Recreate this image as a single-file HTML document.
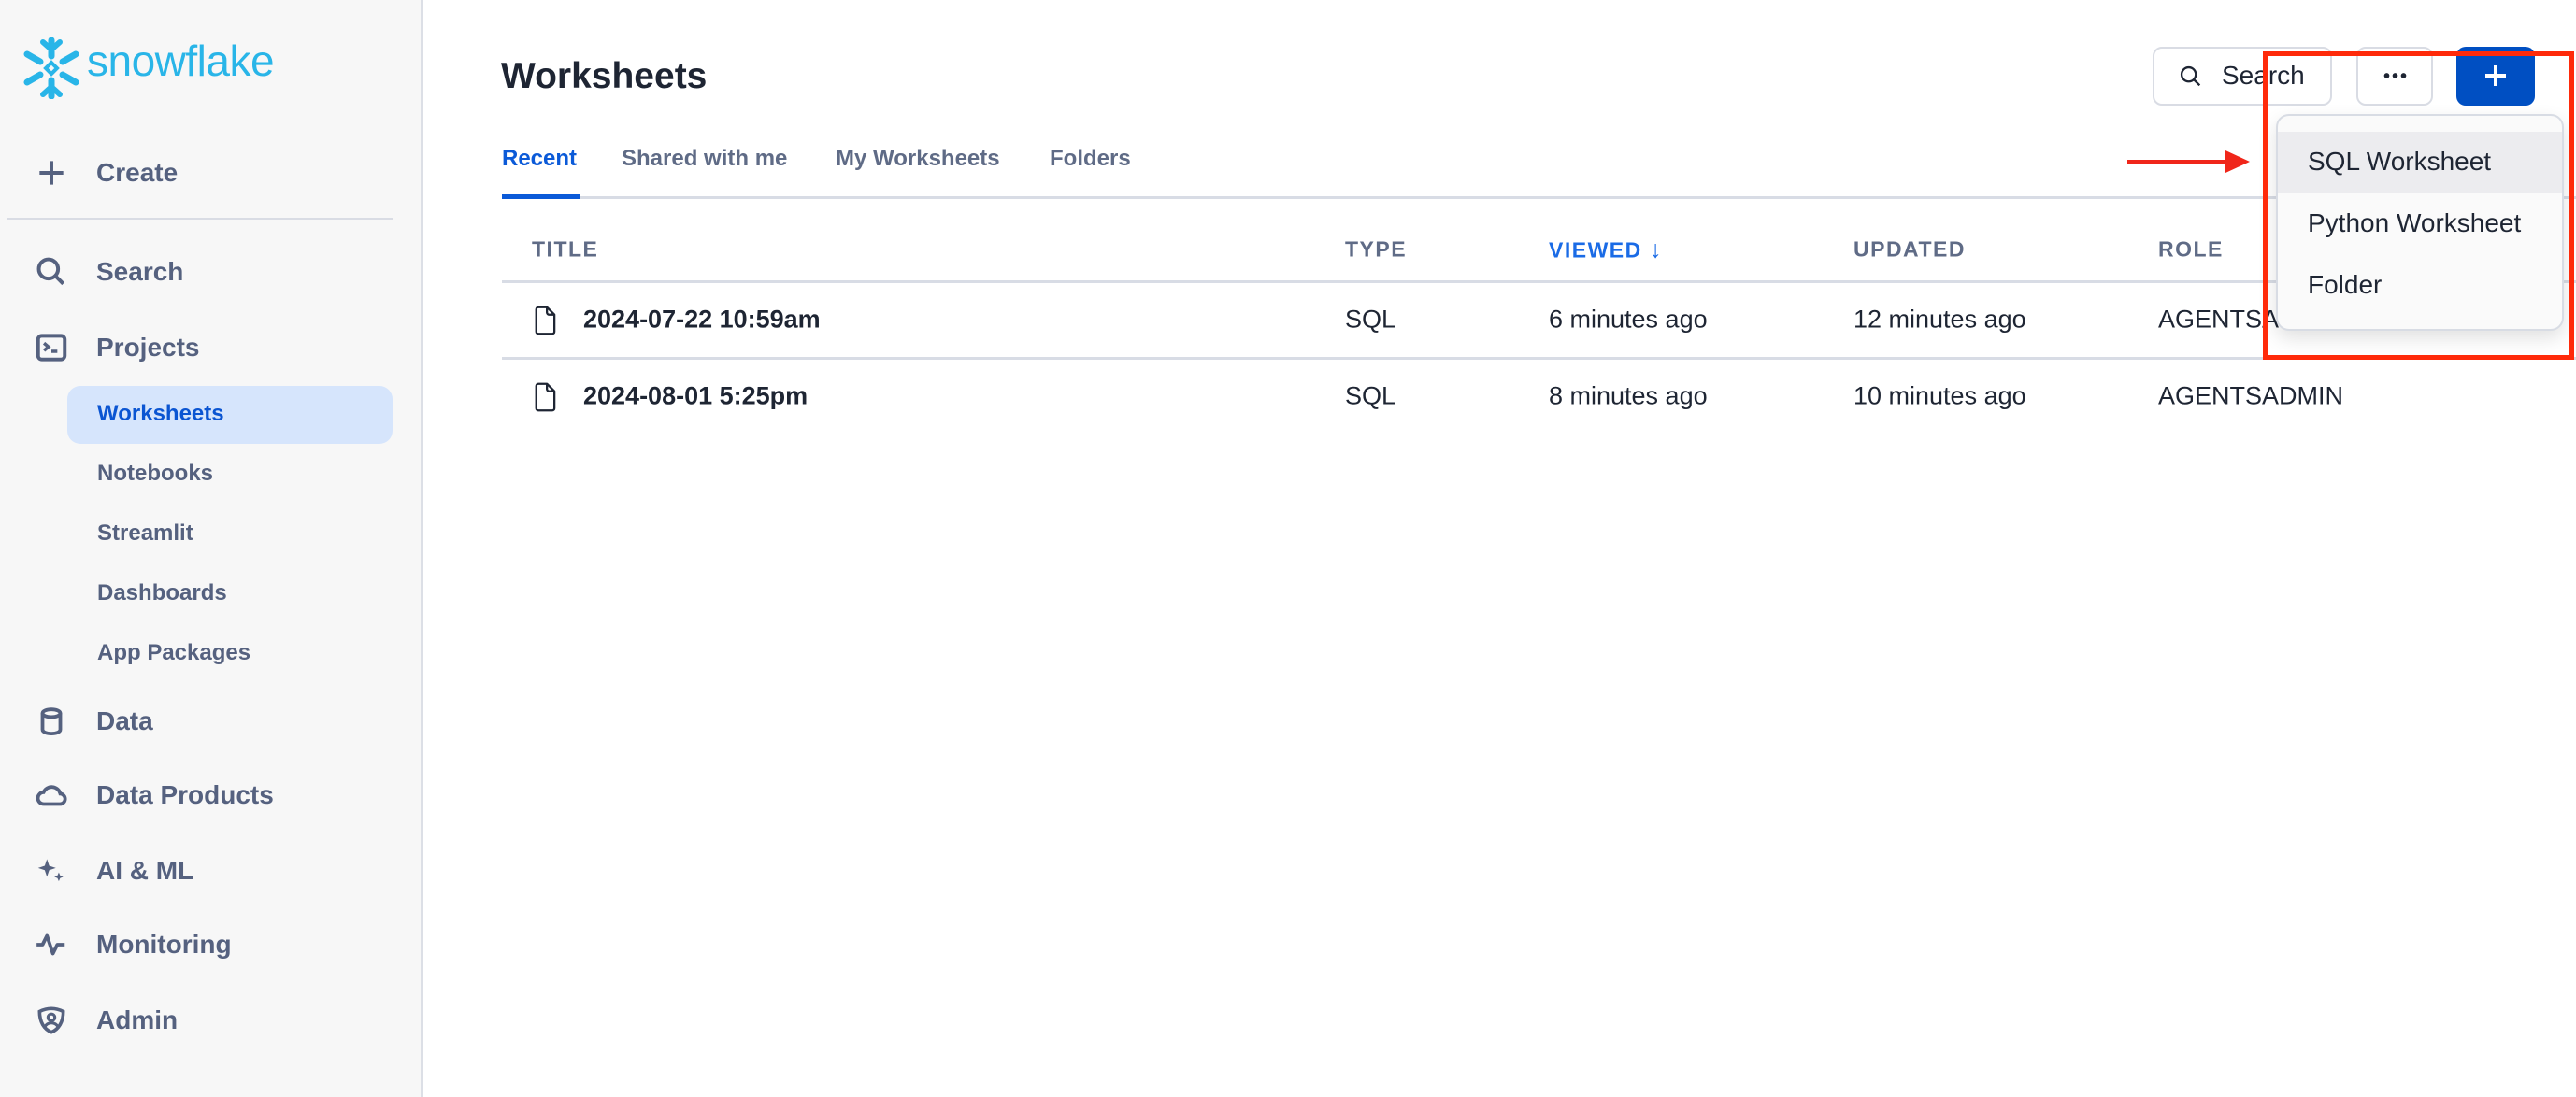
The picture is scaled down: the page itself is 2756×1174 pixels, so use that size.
<!DOCTYPE html>
<html><head><meta charset="utf-8"><style>
*{margin:0;padding:0;box-sizing:border-box}
body{width:2756px;height:1174px;background:#fff;font-family:"Liberation Sans",sans-serif;position:relative;overflow:hidden}
.abs{position:absolute;white-space:nowrap}
#side{position:absolute;left:0;top:0;width:453px;height:1174px;background:#f7f7f7;border-right:3px solid #dcdfe6}
.nav{position:absolute;left:103px;font-size:28px;font-weight:bold;color:#55617f;transform:translateY(-50%)}
.sub{position:absolute;left:104px;font-size:24px;font-weight:bold;color:#55617f;transform:translateY(-50%)}
.ic{position:absolute;left:36px;width:38px;height:38px;transform:translateY(-50%)}
.hd{font-size:23px;font-weight:bold;color:#5f6b86;letter-spacing:1.5px;transform:translateY(-50%)}
.cell{font-size:27px;color:#1e2533;transform:translateY(-50%)}
.hl{position:absolute;left:537px;right:0;height:3px;background:#d8dce5}
.btn{position:absolute;top:50px;height:63px;border:2px solid #d9dce4;border-radius:10px;background:#fff}
.mi{position:absolute;left:2469px;font-size:28px;color:#1e2533;transform:translateY(-50%)}
</style></head><body>
<div id="side">
  <svg class="abs" style="left:22px;top:40px" width="66" height="66" viewBox="-33 -33 66 66">
    <g fill="none" stroke="#29b5e8" stroke-width="7" stroke-linecap="round" stroke-linejoin="round">
      <path d="M0 -30 V-13"/><path d="M0 30 V13"/>
      <path d="M-26 -15 L-12 -7"/><path d="M26 -15 L12 -7"/><path d="M-26 15 L-12 7"/><path d="M26 15 L12 7"/>
      <path d="M-9 -28 L0 -20 L9 -28" stroke-width="6"/>
      <path d="M-9 28 L0 20 L9 28" stroke-width="6"/>
    </g>
    <path d="M0 -6 L6 0 L0 6 L-6 0 Z" fill="none" stroke="#29b5e8" stroke-width="4"/>
  </svg>
  <div class="abs" style="left:93px;top:38px;font-size:46px;color:#29b5e8;letter-spacing:-0.5px">snowflake</div>

  <svg class="ic" style="top:185px" viewBox="0 0 24 24"><path d="M12 4v16M4 12h16" stroke="#55617f" stroke-width="2.5" fill="none"/></svg>
  <div class="nav" style="top:185px">Create</div>
  <div class="abs" style="left:8px;top:233px;width:412px;height:2px;background:#d9dce4"></div>

  <svg class="ic" style="top:291px" viewBox="0 0 24 24"><circle cx="10" cy="10" r="6.5" stroke="#55617f" stroke-width="2.5" fill="none"/><path d="M15 15l5 5" stroke="#55617f" stroke-width="2.5"/></svg>
  <div class="nav" style="top:291px">Search</div>
  <svg class="ic" style="top:372px" viewBox="0 0 24 24"><rect x="3" y="4" width="18" height="16" rx="2.5" stroke="#55617f" stroke-width="2.5" fill="none"/><path d="M7 9l3 2.5L7 14M12 14.5h4" stroke="#55617f" stroke-width="2.2" fill="none"/></svg>
  <div class="nav" style="top:372px">Projects</div>
  <div class="abs" style="left:72px;top:413px;width:348px;height:62px;background:#d6e5fc;border-radius:14px"></div>
  <div class="sub" style="top:443px;color:#0b55d2">Worksheets</div>
  <div class="sub" style="top:507px">Notebooks</div>
  <div class="sub" style="top:571px">Streamlit</div>
  <div class="sub" style="top:635px">Dashboards</div>
  <div class="sub" style="top:699px">App Packages</div>
  <svg class="ic" style="top:772px" viewBox="0 0 24 24"><path d="M6 6.5v11c0 1.7 2.7 2.8 6 2.8s6-1.1 6-2.8v-11" stroke="#55617f" stroke-width="2.4" fill="none"/><ellipse cx="12" cy="6.5" rx="6" ry="2.6" stroke="#55617f" stroke-width="2.4" fill="none"/></svg>
  <div class="nav" style="top:772px">Data</div>
  <svg class="ic" style="top:851px" viewBox="0 0 24 24"><path d="M7 18h10.5a3.5 3.5 0 0 0 .5-7 6 6 0 0 0-11.3-1A4 4 0 0 0 7 18z" stroke="#55617f" stroke-width="2.4" fill="none"/></svg>
  <div class="nav" style="top:851px">Data Products</div>
  <svg class="ic" style="top:932px" viewBox="0 0 24 24"><path d="M9 4l1.5 4.5L15 10l-4.5 1.5L9 16l-1.5-4.5L3 10l4.5-1.5z" fill="#55617f"/><path d="M17 13l.9 2.1 2.1.9-2.1.9L17 19l-.9-2.1-2.1-.9 2.1-.9z" fill="#55617f"/></svg>
  <div class="nav" style="top:932px">AI &amp; ML</div>
  <svg class="ic" style="top:1011px" viewBox="0 0 24 24"><path d="M2 12h4l3-6 4 12 3-6h5" stroke="#55617f" stroke-width="2.4" fill="none" stroke-linejoin="round"/></svg>
  <div class="nav" style="top:1011px">Monitoring</div>
  <svg class="ic" style="top:1092px" viewBox="0 0 24 24"><path d="M4 6c3-1.5 5.5-2 8-2s5 .5 8 2c0 7-3 12-8 14C7 18 4 13 4 6z" stroke="#55617f" stroke-width="2.3" fill="none"/><circle cx="12" cy="10" r="2.3" stroke="#55617f" stroke-width="2" fill="none"/><path d="M7.5 16.5c1-2 2.5-2.8 4.5-2.8s3.5.8 4.5 2.8" stroke="#55617f" stroke-width="2" fill="none"/></svg>
  <div class="nav" style="top:1092px">Admin</div>
</div>

<div class="abs" style="left:536px;top:82px;transform:translateY(-50%);font-size:39px;font-weight:bold;color:#1e2533">Worksheets</div>

<div class="abs" style="left:537px;top:170px;transform:translateY(-50%);font-size:24px;font-weight:bold;color:#0b5ad8">Recent</div>
<div class="abs" style="left:665px;top:170px;transform:translateY(-50%);font-size:24px;font-weight:bold;color:#5f6b86">Shared with me</div>
<div class="abs" style="left:894px;top:170px;transform:translateY(-50%);font-size:24px;font-weight:bold;color:#5f6b86">My Worksheets</div>
<div class="abs" style="left:1123px;top:170px;transform:translateY(-50%);font-size:24px;font-weight:bold;color:#5f6b86">Folders</div>
<div class="hl" style="top:210px"></div>
<div class="abs" style="left:537px;top:208px;width:83px;height:5px;background:#0b5ad8"></div>

<div class="abs hd" style="left:569px;top:267px">TITLE</div>
<div class="abs hd" style="left:1439px;top:267px">TYPE</div>
<div class="abs hd" style="left:1657px;top:267px;color:#1a6be6">VIEWED <span style="font-size:26px">&#8595;</span></div>
<div class="abs hd" style="left:1983px;top:267px">UPDATED</div>
<div class="abs hd" style="left:2309px;top:267px">ROLE</div>
<div class="hl" style="top:300px"></div>

<svg class="abs" style="left:570px;top:327px" width="28" height="32" viewBox="0 0 24 28"><path d="M3 3.5a2 2 0 0 1 2-2h8l7 7v16a2 2 0 0 1-2 2H5a2 2 0 0 1-2-2z M13 1.5v5a2 2 0 0 0 2 2h5" stroke="#1e2533" stroke-width="2" fill="none" stroke-linejoin="round"/></svg>
<div class="abs cell" style="left:624px;top:342px;font-weight:bold">2024-07-22 10:59am</div>
<div class="abs cell" style="left:1439px;top:342px">SQL</div>
<div class="abs cell" style="left:1657px;top:342px">6 minutes ago</div>
<div class="abs cell" style="left:1983px;top:342px">12 minutes ago</div>
<div class="abs cell" style="left:2309px;top:342px">AGENTSADMIN</div>
<div class="hl" style="top:382px"></div>

<svg class="abs" style="left:570px;top:409px" width="28" height="32" viewBox="0 0 24 28"><path d="M3 3.5a2 2 0 0 1 2-2h8l7 7v16a2 2 0 0 1-2 2H5a2 2 0 0 1-2-2z M13 1.5v5a2 2 0 0 0 2 2h5" stroke="#1e2533" stroke-width="2" fill="none" stroke-linejoin="round"/></svg>
<div class="abs cell" style="left:624px;top:424px;font-weight:bold">2024-08-01 5:25pm</div>
<div class="abs cell" style="left:1439px;top:424px">SQL</div>
<div class="abs cell" style="left:1657px;top:424px">8 minutes ago</div>
<div class="abs cell" style="left:1983px;top:424px">10 minutes ago</div>
<div class="abs cell" style="left:2309px;top:424px">AGENTSADMIN</div>

<div class="btn" style="left:2303px;width:192px"></div>
<svg class="abs" style="left:2330px;top:68px" width="28" height="28" viewBox="0 0 24 24"><circle cx="10" cy="10" r="6.5" stroke="#1e2533" stroke-width="2" fill="none"/><path d="M15 15l5 5" stroke="#1e2533" stroke-width="2"/></svg>
<div class="abs" style="left:2377px;top:81px;transform:translateY(-50%);font-size:28px;color:#1e2533">Search</div>
<div class="btn" style="left:2521px;width:82px"></div>
<div class="abs" style="left:2549px;top:78px;width:26px;height:6px;background:radial-gradient(circle,#1e2533 2.6px,transparent 3px) 0 0/9px 6px repeat-x"></div>
<div class="abs" style="left:2628px;top:50px;width:84px;height:63px;background:#004fc2;border-radius:10px"></div>
<div class="abs" style="left:2659px;top:79px;width:22px;height:4px;background:#fff"></div>
<div class="abs" style="left:2668px;top:70px;width:4px;height:22px;background:#fff"></div>

<div class="abs" style="left:2435px;top:122px;width:308px;height:232px;background:#fafafa;border:2px solid #d8dce4;border-radius:14px;box-shadow:0 8px 20px rgba(0,0,0,0.12);overflow:hidden">
  <div style="position:absolute;left:0;right:0;top:17px;height:66px;background:#ececef"></div>
</div>
<div class="mi" style="top:173px">SQL Worksheet</div>
<div class="mi" style="top:239px">Python Worksheet</div>
<div class="mi" style="top:305px">Folder</div>

<div class="abs" style="left:2421px;top:55px;width:333px;height:330px;border:5px solid #ff2a0a"></div>
<div class="abs" style="left:2276px;top:171px;width:108px;height:5px;background:#f0261a"></div>
<div class="abs" style="left:2381px;top:161px;width:0;height:0;border-left:26px solid #f0261a;border-top:12px solid transparent;border-bottom:12px solid transparent"></div>
</body></html>
